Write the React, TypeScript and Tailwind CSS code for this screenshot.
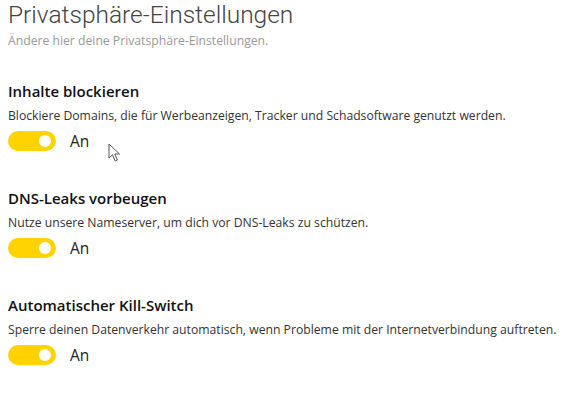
import React from 'react';

interface Setting {
  id: number;
  title: string;
  description: string;
}

const settings: Setting[] = [
  {
    id: 1,
    title: 'Inhalte blockieren',
    description: 'Blockiere Domains, die für Werbeanzeigen, Tracker und Schadsoftware genutzt werden.',
  },
  {
    id: 2,
    title: 'DNS-Leaks vorbeugen',
    description: 'Nutze unsere Nameserver, um dich vor DNS-Leaks zu schützen.',
  },
  {
    id: 3,
    title: 'Automatischer Kill-Switch',
    description: 'Sperre deinen Datenverkehr automatisch, wenn Probleme mit der Internetverbindung auftreten.',
  },
];

const Toggle: React.FC = () => (
  <div className="flex items-center">
    <div className="w-[48px] h-[20px] rounded-full bg-[#ffd200] flex items-center justify-end pr-[5px]">
      <div className="w-[12px] h-[12px] rounded-full bg-white" />
    </div>
    <span className="ml-[14px] text-[15.5px] leading-[20px] text-[#222]">An</span>
  </div>
);

const Cursor: React.FC = () => (
  <svg className="absolute left-[108px] top-[143px]" width="14" height="20" viewBox="0 0 14 20">
    <path
      d="M1 1 L1 15 L4.5 11.8 L7.2 18 L9.4 17 L6.8 11 L11.5 11 Z"
      fill="white"
      stroke="#555"
      strokeWidth="1"
      strokeLinejoin="round"
    />
  </svg>
);

export default function App() {
  return (
    <div
      className="relative w-[578px] h-[405px] bg-white pl-[8px] overflow-hidden"
      style={{ fontFamily: '"Open Sans", "Noto Sans", sans-serif' }}
    >
      <h1
        className="text-[24.5px] leading-[32px] font-light text-[#444] -mt-[1px]"
        style={{ fontFamily: 'Roboto, "Open Sans", sans-serif' }}
      >
        Privatsphäre-Einstellungen
      </h1>
      <p className="text-[12.2px] leading-[18px] text-[#999] mt-[1px]">Ändere hier deine Privatsphäre-Einstellungen.</p>

      <div className="mt-[31px] flex flex-col gap-[37px]">
        {settings.map(setting => (
          <div key={setting.id}>
            <h2 className="text-[15px] leading-[20px] font-semibold text-[#111]">{setting.title}</h2>
            <p className="text-[12.2px] leading-[18px] text-[#333] mt-[6px]">{setting.description}</p>
            <div className="mt-[6px]">
              <Toggle />
            </div>
          </div>
        ))}
      </div>

      <Cursor />
    </div>
  );
}
